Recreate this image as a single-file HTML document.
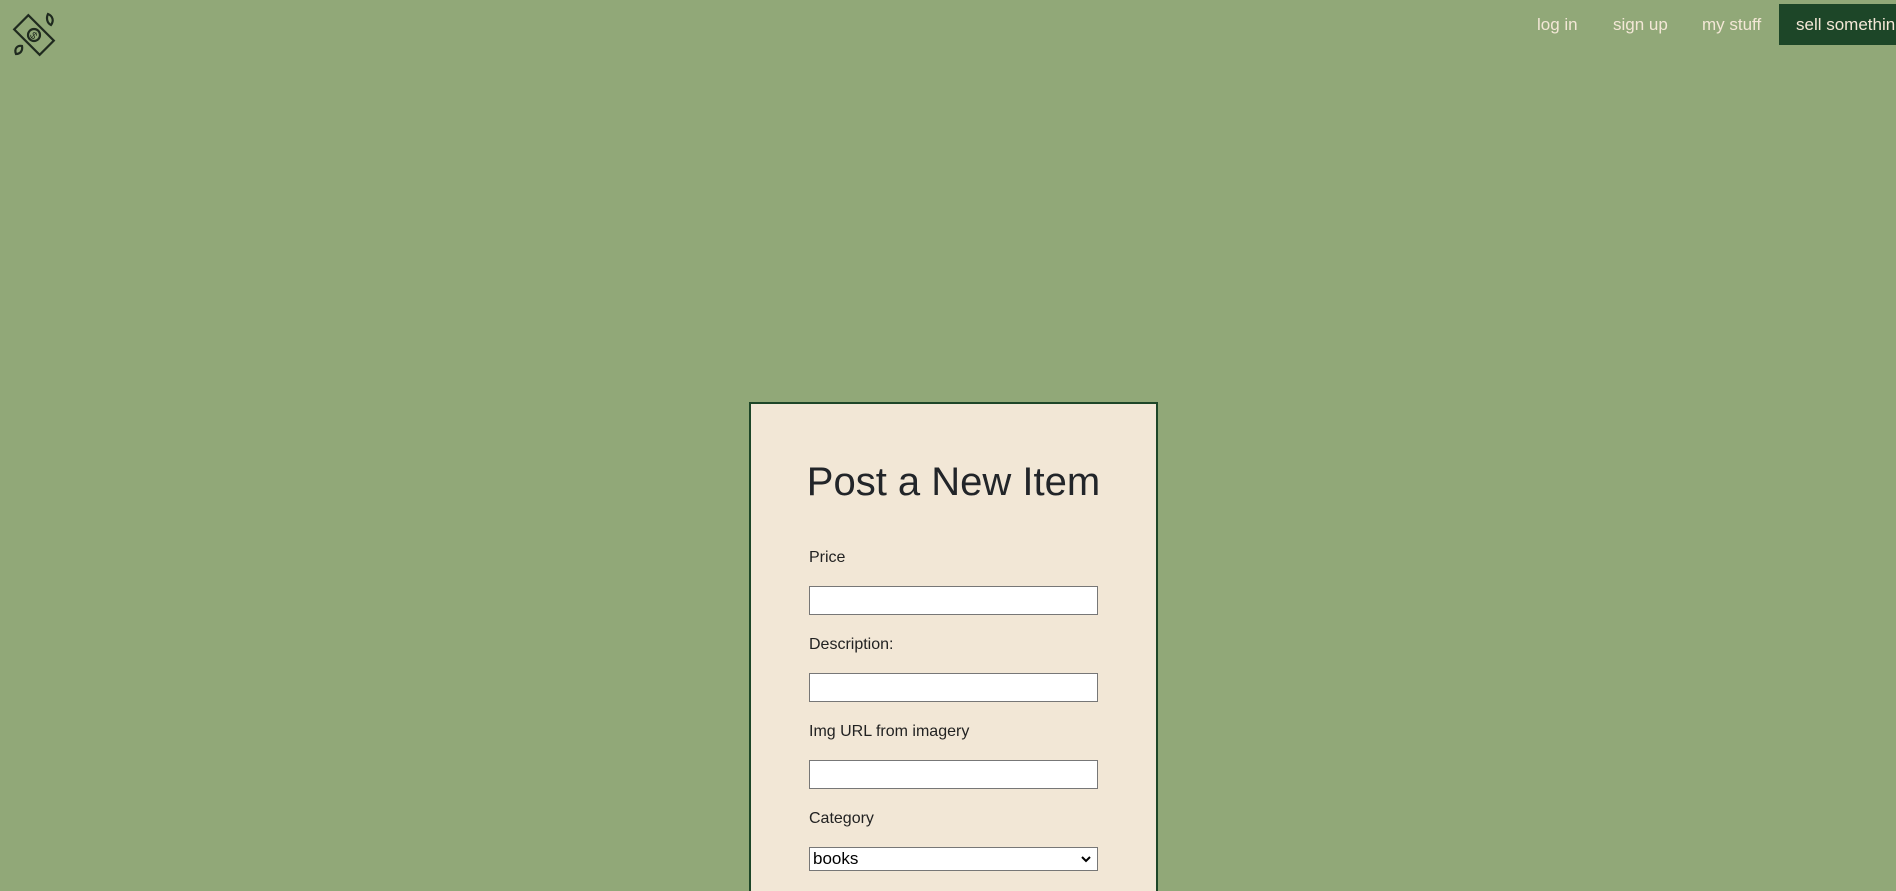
<!DOCTYPE html>
<html style="height:891px;overflow:hidden;"><head><meta charset="utf-8"><style>
html,body{margin:0;padding:0;}
body{width:1896px;height:891px;background:#91a878;font-family:"Liberation Sans",sans-serif;position:relative;overflow:hidden;color:#222;}
.nav a{position:absolute;top:15px;font-size:17px;color:#f3e7d6;text-decoration:none;white-space:nowrap;}
.btn{position:absolute;left:1779px;top:4px;width:117px;height:41px;background:#1d4628;overflow:hidden;}
.card{position:absolute;left:749px;top:402px;width:405px;height:487px;background:#f2e7d6;border:2px solid #1d4628;border-bottom:none;}
h1{position:absolute;top:460px;margin:0;text-align:center;font-size:40px;font-weight:normal;color:#222529;}
.lbl{position:absolute;left:809px;font-size:16px;color:#222;}
.inp{position:absolute;left:809px;width:287px;height:27px;background:#fff;border:1px solid #777;}
</style></head><body>
<svg style="position:absolute;left:8px;top:8px" width="52" height="52" viewBox="0 0 52 52" fill="none" stroke="#1f2a1f" stroke-width="2.2">
<g transform="rotate(45 26 27)"><rect x="8" y="17" width="36" height="20"/><circle cx="26" cy="27" r="6"/><text x="26" y="31" font-size="10" text-anchor="middle" fill="#1f2a1f" stroke="none" font-family="Liberation Sans">$</text></g>
<path d="M40 6c5 2 6 7 3 11c-4-2-5-7-3-11z"/><path d="M8 46c-2-5 1-9 6-8c1 5-2 8-6 8z"/>
</svg>
<div class="nav">
<a style="left:1537px">log in</a>
<a style="left:1613px">sign up</a>
<a style="left:1702px">my stuff</a>
<div class="btn"><a style="left:17px;top:11px">sell somethin'</a></div>
</div>
<div class="card"></div>
<h1 style="left:749px;width:409px;">Post a New Item</h1>
<div class="lbl" style="top:549px">Price</div>
<div class="inp" style="top:586px"></div>
<div class="lbl" style="top:636px">Description:</div>
<div class="inp" style="top:673px"></div>
<div class="lbl" style="top:723px">Img URL from imagery</div>
<div class="inp" style="top:760px"></div>
<div class="lbl" style="top:810px">Category</div>
<div class="inp" style="top:847px;height:22px;font-size:17px;line-height:22px;"><span style="margin-left:3px;color:#000">books</span>
<svg style="position:absolute;right:6px;top:7px" width="10" height="8" viewBox="0 0 10 8"><path d="M1 2l4 4 4-4" stroke="#000" stroke-width="2" fill="none"/></svg></div>
</body></html>
